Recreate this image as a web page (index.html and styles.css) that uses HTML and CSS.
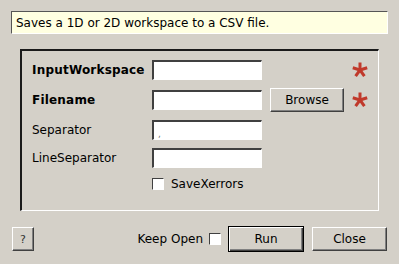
FILE: index.html
```html
<!DOCTYPE html>
<html lang="en">
<head>
  <meta charset="UTF-8">
  <title>SaveCSV input dialog</title>
  <link rel="stylesheet" href="styles.css">
</head>
<body>
  <div class="dialog">
    <div class="desc">Saves a 1D or 2D workspace to a CSV file.</div>

    <div class="group">
      <div class="props">
        <label class="lbl bold">InputWorkspace</label>
        <input class="field" type="text">
        <span></span>
        <svg class="star" viewBox="0 0 16 16"><g stroke="#c0392b" stroke-width="3" stroke-linecap="butt"><line x1="8" y1="8" x2="8" y2="0.5"/><line x1="8" y1="8" x2="15.2" y2="5.7"/><line x1="8" y1="8" x2="12.4" y2="14.1"/><line x1="8" y1="8" x2="3.6" y2="14.1"/><line x1="8" y1="8" x2="0.8" y2="5.7"/></g></svg>

        <label class="lbl bold">Filename</label>
        <input class="field" type="text">
        <button class="btn">Browse</button>
        <svg class="star" viewBox="0 0 16 16"><g stroke="#c0392b" stroke-width="3" stroke-linecap="butt"><line x1="8" y1="8" x2="8" y2="0.5"/><line x1="8" y1="8" x2="15.2" y2="5.7"/><line x1="8" y1="8" x2="12.4" y2="14.1"/><line x1="8" y1="8" x2="3.6" y2="14.1"/><line x1="8" y1="8" x2="0.8" y2="5.7"/></g></svg>

        <label class="lbl">Separator</label>
        <input class="field sep" type="text" value=",">
        <span></span><span></span>

        <label class="lbl">LineSeparator</label>
        <input class="field" type="text">
        <span></span><span></span>

        <span></span>
        <label class="check"><span class="box"></span>SaveXerrors</label>
      </div>
    </div>

    <div class="bottom">
      <button class="btn help">?</button>
      <div class="spacer"></div>
      <label class="keep">Keep Open <span class="box"></span></label>
      <button class="btn run">Run</button>
      <button class="btn close">Close</button>
    </div>
  </div>
</body>
</html>
```

FILE: styles.css
```css
:root {
  --face: #d4d0c8;
  --shadow: #808080;
  --dark: #404040;
  --light: #ffffff;
}

body {
  margin: 0;
  background: var(--face);
  font-family: 'DejaVu Sans', sans-serif;
  font-size: 12px;
  color: #000;
}

.dialog {
  width: 399px;
  height: 264px;
  padding-top: 11px;
  box-sizing: border-box;
}

.desc {
  margin: 0 11px;
  height: 23px;
  box-sizing: border-box;
  background: #ffffe1;
  border-top: 1px solid #555;
  border-left: 1px solid #555;
  border-right: 1px solid var(--light);
  border-bottom: 1px solid var(--light);
  padding: 3px 0 0 4px;
  line-height: 16px;
}

.group {
  margin: 15px 0 0 20px;
  width: 359px;
  height: 162px;
  box-sizing: border-box;
  border-top: 2px solid #1a1a1a;
  border-left: 2px solid #1a1a1a;
  border-right: 1px solid var(--light);
  border-bottom: 1px solid var(--light);
  padding: 7px 0 0 10px;
}

.props {
  display: grid;
  grid-template-columns: 112px 110px 74px 16px;
  grid-template-rows: 24px 24px 24px 20px 20px;
  column-gap: 8px;
  row-gap: 6px;
  align-items: center;
}

.lbl {
  white-space: nowrap;
}

.bold {
  font-weight: bold;
  letter-spacing: 0.2px;
}

.field {
  width: 110px;
  height: 20px;
  box-sizing: border-box;
  margin: 0;
  padding: 0 4px;
  font: inherit;
  font-size: 9px;
  color: #777;
  background: #fff;
  border-top: 2px solid var(--dark);
  border-left: 2px solid var(--dark);
  border-right: 1px solid var(--light);
  border-bottom: 1px solid var(--light);
  outline: none;
}

.sep {
  padding-top: 6px;
}

.star {
  width: 16px;
  height: 16px;
  display: block;
}

.btn {
  margin: 0;
  padding: 0;
  height: 24px;
  box-sizing: border-box;
  font: inherit;
  color: #000;
  background: var(--face);
  border-top: 1px solid var(--light);
  border-left: 1px solid var(--light);
  border-right: 1px solid var(--dark);
  border-bottom: 1px solid var(--dark);
  box-shadow: inset -1px -1px 0 var(--shadow);
}

.check {
  grid-column: 2 / span 3;
  display: flex;
  align-items: center;
  gap: 7px;
}

.box {
  width: 12px;
  height: 12px;
  box-sizing: border-box;
  background: #fff;
  border-top: 1px solid var(--dark);
  border-left: 1px solid var(--dark);
  border-right: 1px solid var(--light);
  border-bottom: 1px solid var(--light);
  display: inline-block;
}

.bottom {
  margin-top: 15px;
  padding: 0 12px;
  height: 26px;
  display: flex;
  align-items: center;
}

.help {
  width: 22px;
  font-size: 11px;
  color: #333;
}

.spacer {
  flex: 1;
}

.keep {
  display: flex;
  align-items: center;
  gap: 6px;
  margin-right: 7px;
}

.run {
  width: 76px;
  height: 26px;
  border: 1px solid #000;
  box-shadow: inset 1px 1px 0 var(--light), inset -1px -1px 0 var(--dark), inset -2px -2px 0 var(--shadow);
  margin-right: 8px;
}

.close {
  width: 75px;
}
```
